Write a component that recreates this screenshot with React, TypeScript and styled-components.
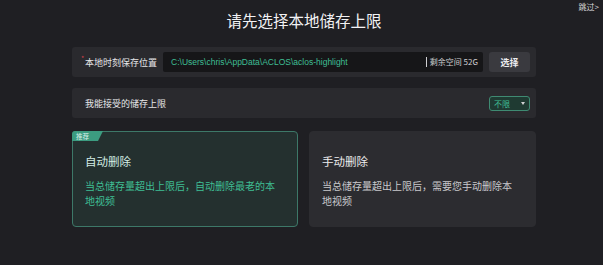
import styled, { createGlobalStyle } from 'styled-components'

const colors = {
  page: '#1f1f23',
  panel: '#2a2a2e',
  input: '#161618',
  button: '#3a3a3f',
  green: '#3fbf94',
  greenCard: '#24302f',
  greenBorder: '#3d7868',
  text: '#e6e6e8',
  muted: '#c9c9cc',
  card: '#2c2c30',
}

const GlobalStyle = createGlobalStyle`
  html, body {
    margin: 0;
    padding: 0;
    background: ${colors.page};
  }
  body {
    font-family: "Noto Sans CJK SC", "Liberation Sans", sans-serif;
    color: ${colors.text};
  }
`

const Page = styled.div`
  width: 603px;
  height: 265px;
  overflow: hidden;
  background: ${colors.page};
  position: relative;
  display: flex;
  flex-direction: column;
  padding: 0 0 0 72px;
  box-sizing: border-box;
`

const Skip = styled.div`
  position: absolute;
  top: 1px;
  right: 4px;
  font-size: 8px;
  color: #d8d8da;
`

const Title = styled.h1`
  margin: 8px 0 0 0;
  width: 464px;
  text-align: center;
  font-size: 15.5px;
  font-weight: 400;
  line-height: 25px;
  color: #f2f2f4;
`

const Panel = styled.div<{ top: number }>`
  margin-top: ${({ top }) => top}px;
  width: 464px;
  height: 30px;
  box-sizing: border-box;
  background: ${colors.panel};
  border-radius: 3px;
  display: flex;
  align-items: center;
  padding: 0 6px 0 9px;
`

const Label = styled.div<{ required?: boolean }>`
  font-size: 9px;
  color: ${colors.text};
  white-space: nowrap;
  flex-shrink: 0;
  margin-right: 6px;
  display: flex;
  align-items: flex-start;
  &:before {
    content: '${({ required }) => (required ? '*' : '')}';
    color: #d0404a;
    font-size: 7px;
    width: 4px;
    margin-top: -3px;
  }
`

const PathBox = styled.div`
  flex: 1;
  height: 20px;
  background: ${colors.input};
  border-radius: 2px;
  display: flex;
  align-items: center;
  padding: 0 5px 0 8px;
  font-family: "Liberation Sans", sans-serif;
  font-size: 8.5px;
`

const PathText = styled.span`
  color: ${colors.green};
  flex: 1;
`

const Space = styled.span`
  color: #cfcfd2;
  font-size: 8px;
  font-family: "Noto Sans CJK SC", "Liberation Sans", sans-serif;
  border-left: 1px solid #cfcfd2;
  padding-left: 3px;
  line-height: 10px;
`

const ChooseButton = styled.button`
  margin-left: 6px;
  width: 41px;
  height: 20px;
  border: none;
  border-radius: 3px;
  background: ${colors.button};
  color: #ececee;
  font-size: 9px;
  font-weight: 700;
  font-family: inherit;
  padding: 0;
`

const Spacer = styled.div`
  flex: 1;
`

const Select = styled.div`
  width: 41px;
  height: 15px;
  box-sizing: border-box;
  border: 1px solid #3f8a72;
  border-radius: 3px;
  background: #1f3a32;
  display: flex;
  align-items: center;
  justify-content: space-between;
  padding: 0 4px 0 4px;
  font-size: 8px;
  color: ${colors.green};
  &:after {
    content: '';
    border-left: 2.5px solid transparent;
    border-right: 2.5px solid transparent;
    border-top: 3px solid #d0d0d2;
  }
`

const Cards = styled.div`
  margin-top: 13px;
  width: 465px;
  display: grid;
  grid-template-columns: 226px 227px;
  gap: 11px;
`

const Card = styled.div<{ active?: boolean }>`
  position: relative;
  height: 96px;
  box-sizing: border-box;
  border-radius: 4px;
  background: ${({ active }) => (active ? colors.greenCard : colors.card)};
  border: 1px solid ${({ active }) => (active ? colors.greenBorder : colors.card)};
  padding: 21px 16px 0 12px;
`

const Tag = styled.div`
  position: absolute;
  top: -1px;
  left: -1px;
  width: 31px;
  height: 10px;
  background: #3c9c80;
  border-radius: 3px 0 0 0;
  clip-path: polygon(0 0, 100% 0, 84% 100%, 0 100%);
  font-size: 6.5px;
  line-height: 10px;
  color: #d9efe8;
  padding-left: 4px;
  box-sizing: border-box;
`

const CardTitle = styled.div<{ active?: boolean }>`
  font-size: 11.5px;
  line-height: 16px;
  color: ${({ active }) => (active ? '#d4ede4' : '#ececee')};
`

const CardDesc = styled.div<{ active?: boolean }>`
  margin-top: 9px;
  font-size: 10px;
  line-height: 15px;
  color: ${({ active }) => (active ? colors.green : colors.muted)};
`

const App = () => (
  <Page>
    <GlobalStyle />
    <Skip>{'跳过>'}</Skip>
    <Title>{'请先选择本地储存上限'}</Title>
    <Panel top={14}>
      <Label required>{'本地时刻保存位置'}</Label>
      <PathBox>
        <PathText>{'C:\\Users\\chris\\AppData\\ACLOS\\aclos-highlight'}</PathText>
        <Space>{'剩余空间 52G'}</Space>
      </PathBox>
      <ChooseButton>{'选择'}</ChooseButton>
    </Panel>
    <Panel top={11}>
      <Label>{'我能接受的储存上限'}</Label>
      <Spacer />
      <Select>{'不限'}</Select>
    </Panel>
    <Cards>
      <Card active>
        <Tag>{'推荐'}</Tag>
        <CardTitle active>{'自动删除'}</CardTitle>
        <CardDesc active>{'当总储存量超出上限后，自动删除最老的本地视频'}</CardDesc>
      </Card>
      <Card>
        <CardTitle>{'手动删除'}</CardTitle>
        <CardDesc>{'当总储存量超出上限后，需要您手动删除本地视频'}</CardDesc>
      </Card>
    </Cards>
  </Page>
)

export default App
